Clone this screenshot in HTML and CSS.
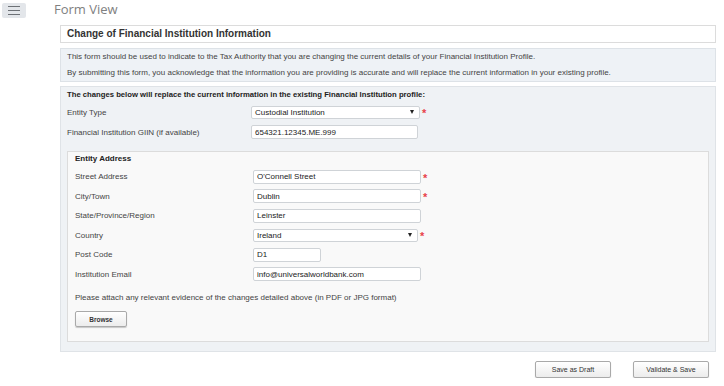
FILE: index.html
```html
<!DOCTYPE html>
<html lang="en">
<head>
  <meta charset="UTF-8">
  <meta name="viewport" content="width=device-width, initial-scale=1.0">
  <title>Form View</title>
  <link rel="stylesheet" href="styles.css">
</head>
<body>
  <header class="topbar">
    <button class="menu-btn" aria-label="Menu"><span></span><span></span><span></span></button>
    <h1 class="page-title">Form View</h1>
  </header>

  <main class="form-view">
    <div class="form-title">Change of Financial Institution Information</div>

    <div class="notice">
      <p>This form should be used to indicate to the Tax Authority that you are changing the current details of your Financial Institution Profile.</p>
      <p>By submitting this form, you acknowledge that the information you are providing is accurate and will replace the current information in your existing profile.</p>
    </div>

    <section class="panel">
      <h2>The changes below will replace the current information in the existing Financial Institution profile:</h2>

      <div class="row">
        <label>Entity Type</label>
        <div class="select w-select">Custodial Institution<span class="arrow"></span></div>
        <span class="req">*</span>
      </div>
      <div class="row">
        <label>Financial Institution GIIN (if available)</label>
        <input class="field w-giin" type="text" value="654321.12345.ME.999">
      </div>

      <div class="address">
        <h3>Entity Address</h3>
        <div class="row">
          <label>Street Address</label>
          <input class="field" type="text" value="O'Connell Street">
          <span class="req">*</span>
        </div>
        <div class="row">
          <label>City/Town</label>
          <input class="field" type="text" value="Dublin">
          <span class="req">*</span>
        </div>
        <div class="row">
          <label>State/Province/Region</label>
          <input class="field" type="text" value="Leinster">
        </div>
        <div class="row">
          <label>Country</label>
          <div class="select w-country">Ireland<span class="arrow"></span></div>
          <span class="req">*</span>
        </div>
        <div class="row">
          <label>Post Code</label>
          <input class="field w-short" type="text" value="D1">
        </div>
        <div class="row">
          <label>Institution Email</label>
          <input class="field" type="text" value="info@universalworldbank.com">
        </div>

        <p class="attach">Please attach any relevant evidence of the changes detailed above (in PDF or JPG format)</p>
        <button class="btn btn-browse">Browse</button>
      </div>
    </section>

    <div class="actions">
      <button class="btn">Save as Draft</button>
      <button class="btn">Validate &amp; Save</button>
    </div>
  </main>
</body>
</html>
```

FILE: styles.css
```css
body {
  margin: 0;
  font-family: "Liberation Sans", Arial, sans-serif;
  font-size: 8px;
  color: #444;
  background-color: #fff;
}
.topbar {
  display: flex;
  align-items: flex-start;
  height: 25px;
}
.menu-btn {
  margin: 3px 0 0 2px;
  width: 24px;
  height: 15px;
  padding: 3px 6px;
  border: none;
  border-radius: 2px;
  background-color: #e3e6ea;
  display: flex;
  flex-direction: column;
  justify-content: space-between;
}
.menu-btn span {
  display: block;
  height: 1px;
  background-color: #6d7176;
}
.page-title {
  margin: 0 0 0 28px;
  font-family: "Open Sans", "Liberation Sans", sans-serif;
  font-weight: 400;
  font-size: 13px;
  line-height: 18px;
  color: #808080;
}
.form-view {
  margin-left: 60px;
  width: 656px;
}
.form-title {
  height: 16px;
  line-height: 16px;
  padding: 0 6px;
  border: 1px solid #dcdcdc;
  font-size: 10px;
  font-weight: bold;
  color: #333;
}
.notice {
  margin-top: 5px;
  padding: 0 6px;
  border: 1px solid #dde2e7;
  background-color: #eef2f6;
}
.notice p {
  margin: 0;
  line-height: 16px;
}
.panel {
  margin-top: 4px;
  padding: 1px 6px 9px;
  border: 1px solid #dfe3e7;
  background-color: #eff2f5;
}
.panel h2 {
  margin: 0;
  font-size: 7.7px;
  line-height: 14px;
  color: #222;
}
.row {
  display: flex;
  align-items: center;
  height: 20px;
}
.row label {
  width: 184px;
  flex-shrink: 0;
}
.field, .select {
  box-sizing: border-box;
  height: 14px;
  padding: 0 3px;
  border: 1px solid #cfd3d7;
  border-radius: 2px;
  background-color: #fff;
  font-family: "Liberation Sans", Arial, sans-serif;
  font-size: 8px;
  color: #222;
}
.field {
  width: 168px;
}
.select {
  display: flex;
  align-items: center;
  justify-content: space-between;
  height: 13px;
}
.arrow {
  width: 0;
  height: 0;
  border-left: 2.5px solid transparent;
  border-right: 2.5px solid transparent;
  border-top: 4px solid #222;
  margin-right: 2px;
}
.w-select {
  width: 169px;
}
.w-giin {
  width: 167px;
}
.w-country {
  width: 165px;
}
.w-short {
  width: 68px;
}
.req {
  margin-left: 2px;
  color: #e8414a;
  font-size: 11px;
  font-weight: bold;
  line-height: 11px;
  padding-top: 3px;
}
.address {
  margin-top: 9px;
  padding: 0 7px 14px;
  border: 1px solid #dcdcdc;
  background-color: #f9f9f9;
}
.address h3 {
  margin: 0 0 1px;
  font-size: 8px;
  line-height: 14px;
  color: #222;
}
.address .row {
  height: 19.5px;
}
.address .row label {
  width: 178px;
}
.attach {
  margin: 7px 0 0;
  line-height: 14px;
}
.btn {
  height: 17px;
  width: 76px;
  padding: 0;
  border: 1px solid #a9a9a9;
  border-radius: 2px;
  background: linear-gradient(#ffffff, #ececec);
  box-shadow: 0 1px 1px rgba(0, 0, 0, 0.2);
  font-family: "Liberation Sans", Arial, sans-serif;
  font-size: 7px;
  color: #333;
}
.btn-browse {
  display: block;
  margin-top: 6px;
  width: 52px;
  height: 16px;
  font-weight: bold;
  font-size: 6.5px;
}
.actions {
  display: flex;
  justify-content: flex-end;
  gap: 22px;
  margin-top: 9px;
  padding-right: 7px;
}
```
